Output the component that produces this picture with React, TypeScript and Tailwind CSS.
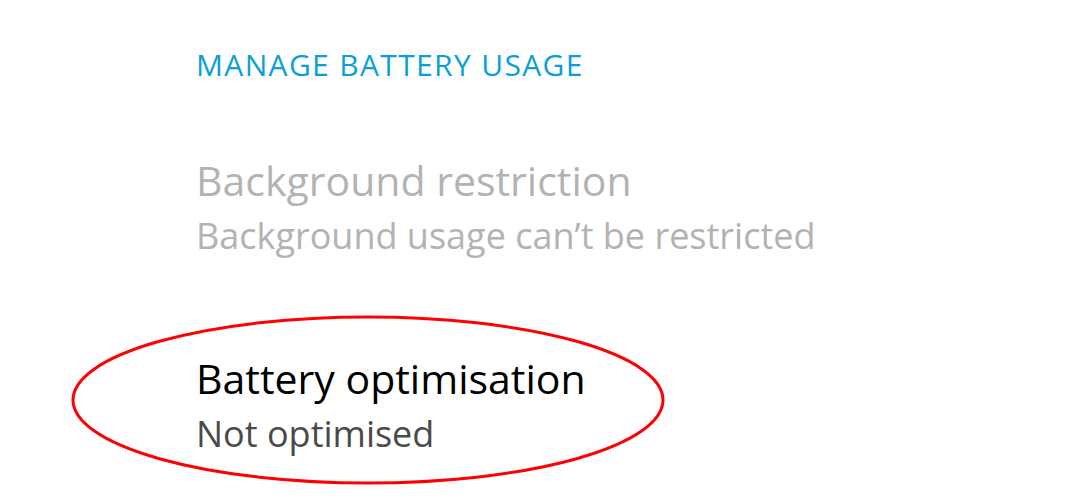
export default function App() {
  return (
    <div className="w-[1080px] h-[498px] bg-white overflow-hidden relative" style={{ fontFamily: '"Open Sans", "Noto Sans", sans-serif' }}>
      <div className="pl-[196px] flex flex-col">
        <div className="mt-[45px] text-[30px] leading-[40px] tracking-[0.045em] text-[#0a9fd8]">MANAGE BATTERY USAGE</div>
        <div className="mt-[67px] flex flex-col">
          <div className="text-[41px] leading-[56px] text-[#b3b3b3]">Background restriction</div>
          <div className="text-[36px] leading-[56px] text-[#b3b3b3]">Background usage can’t be restricted</div>
        </div>
        <div className="mt-[86px] flex flex-col">
          <div className="text-[41px] leading-[56px] text-black">Battery optimisation</div>
          <div className="text-[36px] leading-[56px] text-[#4a4a4a]">Not optimised</div>
        </div>
      </div>
      <svg className="absolute left-0 top-0 pointer-events-none" width="1080" height="498">
        <ellipse cx="368" cy="400" rx="295" ry="83" fill="none" stroke="#ff0000" strokeWidth="3" />
      </svg>
    </div>
  )
}
